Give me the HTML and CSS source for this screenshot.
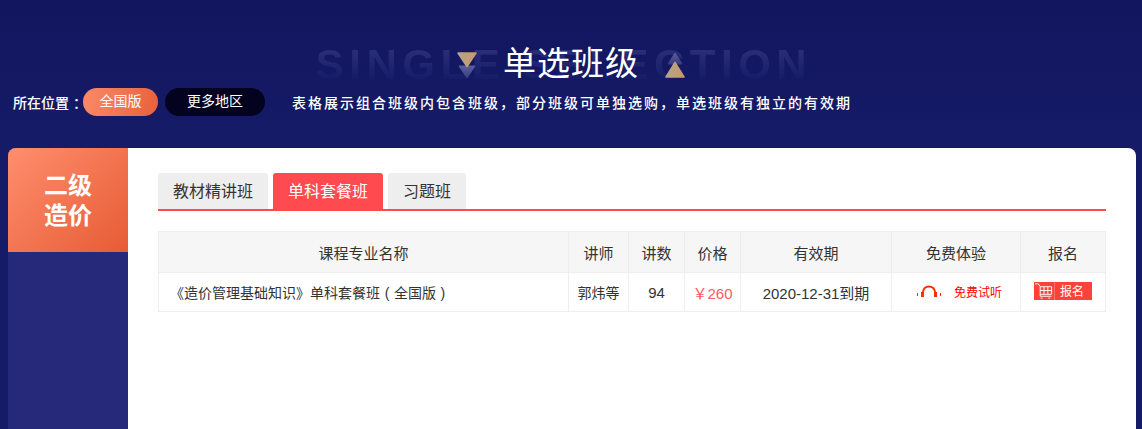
FILE: index.html
```html
<!DOCTYPE html>
<html lang="zh-CN">
<head>
    <meta charset="UTF-8">
    <title>单选班级</title>
    <link rel="stylesheet" href="styles.css">
</head>
<body>
    <div class="header">
        <div class="title-row">
            <div class="ghost-title">SINGLE SELECTION</div>
            <svg class="arrows" width="22" height="26" viewBox="0 0 22 26">
                <defs>
                    <linearGradient id="goldA" x1="0" y1="0" x2="1" y2="0">
                        <stop offset="0" stop-color="#b5a48c"/>
                        <stop offset="1" stop-color="#c99a68"/>
                    </linearGradient>
                    <linearGradient id="shade" x1="0" y1="0" x2="0" y2="1">
                        <stop offset="0" stop-color="#5a5e9a"/>
                        <stop offset="1" stop-color="#3a3e82"/>
                    </linearGradient>
                </defs>
                <path d="M3 14 H19 L11 26 Z" fill="url(#shade)" stroke="url(#shade)" stroke-linejoin="round"/>
                <path d="M2 1 H20 L11 14.5 Z" fill="url(#goldA)" stroke="url(#goldA)" stroke-width="1.5" stroke-linejoin="round"/>
            </svg>
            <h1>单选班级</h1>
            <svg class="arrows" width="22" height="26" viewBox="0 0 22 26">
                <path d="M4 12 H18 L11 1 Z" fill="url(#shade)" stroke="url(#shade)" stroke-linejoin="round"/>
                <path d="M2 25 H20 L11 10.5 Z" fill="url(#goldA)" stroke="url(#goldA)" stroke-width="1.5" stroke-linejoin="round"/>
            </svg>
        </div>
        <div class="location-row">
            <span class="location-label">所在位置 ：</span>
            <a class="pill pill-active">全国版</a>
            <a class="pill pill-dark">更多地区</a>
            <span class="desc">表格展示组合班级内包含班级，部分班级可单独选购，单选班级有独立的有效期</span>
        </div>
    </div>

    <div class="card">
        <div class="side">
            <div class="side-title">二级<br>造价</div>
        </div>
        <div class="main">
            <ul class="tabs">
                <li class="tab">教材精讲班</li>
                <li class="tab tab-active">单科套餐班</li>
                <li class="tab tab-short">习题班</li>
            </ul>
            <table class="course-table">
                <colgroup>
                    <col class="col-name">
                    <col class="col-teacher">
                    <col class="col-count">
                    <col class="col-price">
                    <col class="col-date">
                    <col class="col-free">
                    <col class="col-buy">
                </colgroup>
                <thead>
                    <tr>
                        <th>课程专业名称</th>
                        <th>讲师</th>
                        <th>讲数</th>
                        <th>价格</th>
                        <th>有效期</th>
                        <th>免费体验</th>
                        <th>报名</th>
                    </tr>
                </thead>
                <tbody>
                    <tr>
                        <td class="name">《造价管理基础知识》单科套餐班 ( 全国版 )</td>
                        <td class="teacher">郭炜等</td>
                        <td>94</td>
                        <td class="price">￥260</td>
                        <td>2020-12-31到期</td>
                        <td>
                            <a class="free-link">
                                <svg width="24" height="13" viewBox="0 0 24 13">
                                    <path d="M6 11 V7 A6 5.5 0 0 1 18 7 V11" fill="none" stroke="#ff3000" stroke-width="2"/>
                                    <rect x="0" y="8" width="1" height="3" fill="#ff3000"/>
                                    <rect x="4" y="7" width="3" height="5" fill="#ff3000"/>
                                    <rect x="17" y="7" width="3" height="5" fill="#ff3000"/>
                                    <rect x="23" y="8" width="1" height="3" fill="#ff3000"/>
                                </svg>
                                <span>免费试听</span>
                            </a>
                        </td>
                        <td>
                            <a class="buy-btn">
                                <svg width="21" height="18" viewBox="0 0 21 18">
                                    <path d="M1 1.5 H4.5 L6.5 4.5 V14.5 H18.5 M6.5 4.5 H18.5 V12.5 H6.5 M6.5 8.5 H18.5 M10.5 4.5 V12.5 M14.5 4.5 V12.5 M7 16.5 H9 M15 16.5 H17" fill="none" stroke="#fff" stroke-width="1"/>
                                </svg>
                                <span>报名</span>
                            </a>
                        </td>
                    </tr>
                </tbody>
            </table>
        </div>
    </div>
</body>
</html>
```

FILE: styles.css
```css
* {
    box-sizing: border-box;
}

html, body {
    height: 100%;
}

body {
    margin: 0;
    overflow: hidden;
    background: #161b68;
    font-family: "Liberation Sans", "Noto Sans CJK SC", sans-serif;
    color: #333;
}

.header {
    height: 148px;
    padding-top: 44px;
    background: linear-gradient(180deg, #12165e, #161b68);
}

.title-row {
    position: relative;
    display: flex;
    justify-content: center;
    align-items: center;
    gap: 25px;
    height: 40px;
}

.ghost-title {
    position: absolute;
    left: 0;
    right: 14px;
    top: -2px;
    text-align: center;
    font-size: 42px;
    font-weight: 700;
    line-height: 46px;
    letter-spacing: 5.5px;
    background: linear-gradient(180deg, #2b3078 10%, #161b68 85%);
    -webkit-background-clip: text;
    background-clip: text;
    color: transparent;
}

.title-row h1 {
    position: relative;
    margin: 0;
    font-size: 33px;
    font-weight: 400;
    letter-spacing: 1px;
    line-height: 40px;
    color: #fff;
}

.arrows {
    position: relative;
    margin-top: 2px;
}

.location-row {
    display: flex;
    align-items: center;
    height: 28px;
    margin-top: 4px;
    padding-left: 13px;
    color: #fff;
}

.location-label {
    width: 70px;
    font-size: 14px;
    font-weight: 500;
    white-space: nowrap;
}

.pill {
    height: 28px;
    border-radius: 14px;
    font-size: 14px;
    line-height: 27px;
    text-align: center;
    color: #fff;
}

.pill-active {
    width: 75px;
    background: linear-gradient(100deg, #fb8a68, #e8613a);
}

.pill-dark {
    width: 100px;
    margin-left: 7px;
    background: #04031f;
}

.desc {
    margin-left: 27px;
    font-size: 14px;
    font-weight: 500;
    letter-spacing: 2px;
}

.card {
    display: flex;
    height: 281px;
    margin: 0 6px 0 8px;
    background: #fff;
    border-radius: 8px 8px 0 0;
    overflow: hidden;
}

.side {
    flex: none;
    width: 120px;
    background: #26287a;
}

.side-title {
    height: 104px;
    padding-top: 23px;
    text-align: center;
    font-size: 24px;
    font-weight: 700;
    line-height: 30px;
    color: #fff;
    background: linear-gradient(135deg, #ff8e6e, #e65c34);
}

.main {
    flex: 1;
    padding: 25px 30px 0;
}

.tabs {
    display: flex;
    gap: 5px;
    height: 38px;
    margin: 0;
    padding: 0;
    list-style: none;
    border-bottom: 2px solid #ff4a50;
}

.tab {
    width: 110px;
    height: 36px;
    border-radius: 3px 3px 0 0;
    background: #eee;
    font-size: 16px;
    line-height: 38px;
    text-align: center;
}

.tab-active {
    background: #ff4a50;
    color: #fff;
}

.tab-short {
    width: 78px;
}

.course-table {
    width: 947px;
    margin-top: 20px;
    border-collapse: collapse;
    table-layout: fixed;
    font-size: 15px;
}

.course-table th,
.course-table td {
    padding: 0;
    border: 1px solid #eee;
    text-align: center;
    font-weight: 400;
}

.course-table th {
    height: 41px;
    background: #f6f6f6;
}

.course-table td {
    height: 39px;
}

.course-table .name {
    padding-left: 11px;
    text-align: left;
    font-size: 14px;
    word-spacing: 0.75px;
}

.course-table .teacher {
    font-size: 14px;
}

.col-name { width: 410px; }
.col-teacher { width: 60px; }
.col-count { width: 56px; }
.col-price { width: 56px; }
.col-date { width: 151px; }
.col-free { width: 129px; }
.col-buy { width: 85px; }

.price {
    color: #ff5a5f;
}

.free-link {
    display: inline-flex;
    align-items: center;
    gap: 13px;
    margin-left: 7px;
    font-size: 12px;
    color: #f00;
}

.buy-btn {
    display: flex;
    align-items: center;
    width: 58px;
    height: 18px;
    margin: 0 0 3px 13px;
    background: #ff4237;
    font-size: 12px;
    color: #fff;
}

.buy-btn svg {
    flex: none;
    border-right: 1px solid #fff4;
}

.buy-btn span {
    margin-left: 5px;
}
```
